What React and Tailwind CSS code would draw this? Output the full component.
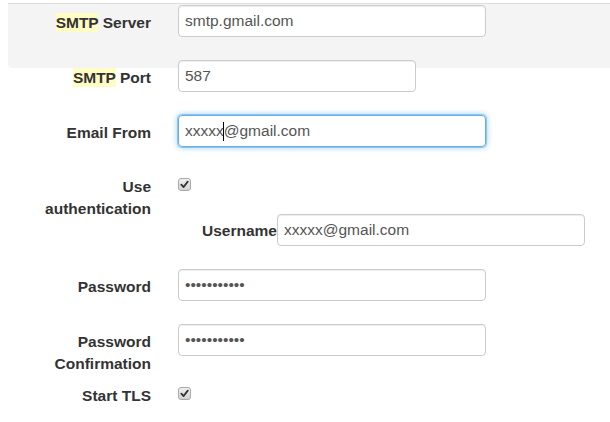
import React from 'react';

const font = { fontFamily: '"Liberation Sans", Arial, sans-serif' };

function Label({ children, className = '' }) {
  return (
    <div className={`shrink-0 text-right font-bold text-[15.5px] leading-[22px] text-[#333] ${className}`}>
      {children}
    </div>
  );
}

function TextBox({ value, type = 'text', width = 'w-[308px]' }) {
  return (
    <input
      readOnly
      type={type}
      defaultValue={value}
      className={`${width} h-[32px] shrink-0 rounded-[4px] border border-[#ccc] bg-white px-[6px] text-[15.5px] text-[#555] shadow-[inset_0_1px_1px_rgba(0,0,0,0.075)] outline-none`}
    />
  );
}

function Check() {
  return (
    <div className="flex h-[13px] w-[13px] items-center justify-center rounded-[3px] border border-[#a9a9a9] bg-gradient-to-b from-[#eee] to-[#d4d4d4]">
      <svg width="9" height="9" viewBox="0 0 10 10">
        <path d="M1.5 5.2 L4 7.8 L8.6 1.8" fill="none" stroke="#333" strokeWidth="2" strokeLinecap="round" strokeLinejoin="round" />
      </svg>
    </div>
  );
}

const Hl = ({ children }) => <span className="bg-[#fffcc4] py-[1px]">{children}</span>;

export default function App() {
  return (
    <div className="h-[422px] w-[610px] overflow-hidden bg-white" style={font}>
      {/* highlighted row */}
      <div className="mt-[3px] ml-[8px] h-[65px] rounded-bl-[4px] border-t border-[#ddd] bg-[#f4f4f4] pt-[1px]">
        <div className="flex items-start gap-[27px]">
          <Label className="w-[143px] pt-[7px]"><Hl>SMTP</Hl> Server</Label>
          <TextBox value="smtp.gmail.com" />
        </div>
      </div>

      <div className="-mt-[8px] flex items-start gap-[27px]">
        <Label className="w-[151px] pt-[7px]"><Hl>SMTP</Hl> Port</Label>
        <TextBox value="587" width="w-[238px]" />
      </div>

      <div className="mt-[23px] flex items-start gap-[27px]">
        <Label className="w-[151px] pt-[7px]">Email From</Label>
        <div className="flex h-[32px] w-[308px] items-center rounded-[4px] border border-[#66afe9] px-[6px] text-[15.5px] text-[#555] shadow-[0_0_0_1px_rgba(102,175,233,0.6),0_0_6px_rgba(102,175,233,0.8)]">
          <span>xxxxx</span>
          <span className="mx-[-0.5px] inline-block h-[19px] w-px bg-black" />
          <span>@gmail.com</span>
        </div>
      </div>

      <div className="mt-[22px] flex items-start gap-[27px]">
        <Label className="w-[151px] pt-[7px]">Use<br />authentication</Label>
        <div className="flex flex-col">
          <div className="mt-[9px]"><Check /></div>
          <div className="mt-[23px] flex items-start">
            <Label className="w-[99px] pt-[6px]">Username</Label>
            <TextBox value="xxxxx@gmail.com" />
          </div>
        </div>
      </div>

      <div className="mt-[23px] flex items-start gap-[27px]">
        <Label className="w-[151px] pt-[7px]">Password</Label>
        <TextBox type="password" value="xxxxxxxxxxx" />
      </div>

      <div className="mt-[23px] flex items-start gap-[27px]">
        <Label className="w-[151px] pt-[7px]">Password<br />Confirmation</Label>
        <TextBox type="password" value="xxxxxxxxxxx" />
      </div>

      <div className="mt-[3px] flex items-start gap-[27px]">
        <Label className="w-[151px] pt-[7px]">Start TLS</Label>
        <div className="mt-[9px]"><Check /></div>
      </div>
    </div>
  );
}
